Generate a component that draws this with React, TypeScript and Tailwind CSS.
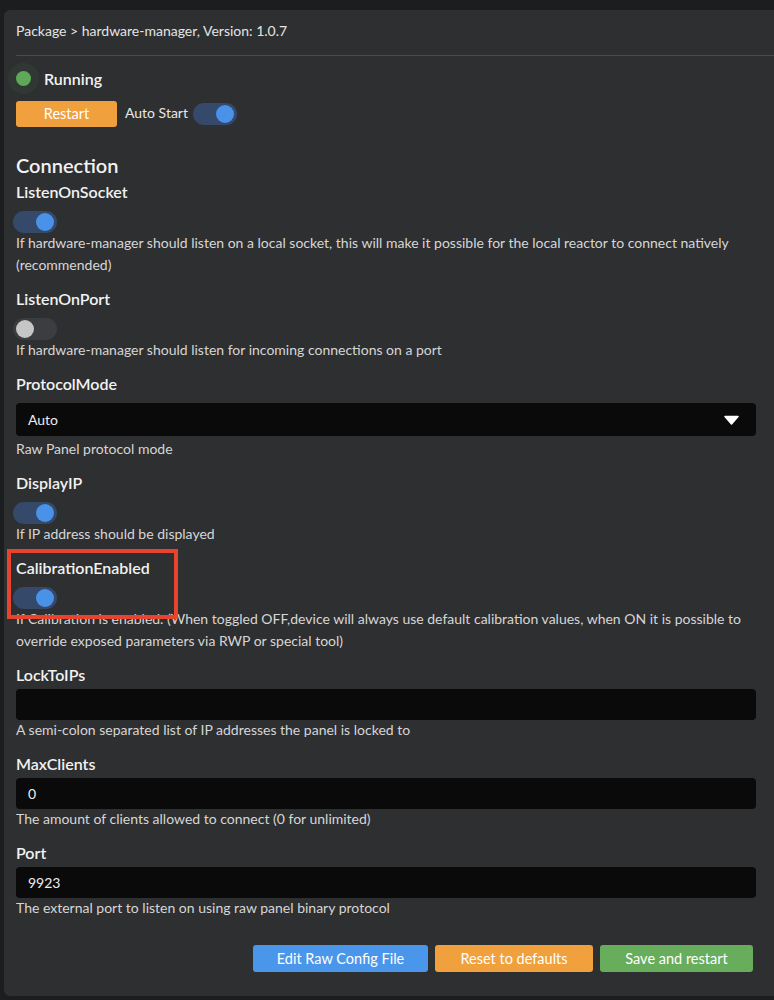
import { ReactNode } from "react"

const font = { fontFamily: "Lato, 'Noto Sans', sans-serif" }

function Toggle({ on }: { on: boolean }) {
  return (
    <div
      className={`relative h-[22px] w-[44px] rounded-full ${on ? "bg-[#35496a]" : "bg-[#3c3d40]"}`}
    >
      <div
        className={`absolute top-[2px] h-[18px] w-[18px] rounded-full ${
          on ? "right-[3px] bg-[#4a92e8]" : "left-[3px] bg-[#c6c6c6]"
        }`}
      />
    </div>
  )
}

function Label({ children }: { children: ReactNode }) {
  return <div className="h-6 text-[16px] font-semibold leading-6 text-[#f2f2f2]">{children}</div>
}

function Desc({ children }: { children: ReactNode }) {
  return <p className="text-[14px] leading-[22px] text-[#d6d6d6]">{children}</p>
}

function SwitchField({ label, on, desc, mark }: { label: string; on: boolean; desc: string; mark?: boolean }) {
  return (
    <div className="relative">
      <Label>{label}</Label>
      <div className="h-[28px] pt-[7px] -ml-[3px]">
        <Toggle on={on} />
      </div>
      <Desc>{desc}</Desc>
      {mark && (
        <div className="pointer-events-none absolute -left-[9px] -top-[7px] h-[70px] w-[171px] border-4 border-[#e8432c]" />
      )}
    </div>
  )
}

function InputField({ label, value, desc }: { label: string; value: string; desc: string }) {
  return (
    <div>
      <Label>{label}</Label>
      <div className="mt-[2px] flex h-[31px] items-center rounded bg-[#0a0a0a] px-3 text-[14px] text-[#ededed]">
        {value}
      </div>
      <div className="-mt-px">
        <Desc>{desc}</Desc>
      </div>
    </div>
  )
}

export default function App() {
  return (
    <div className="min-h-[1000px] overflow-hidden bg-[#1c1d1f] pt-[10px]" style={font}>
      <div className="ml-1 w-[800px] rounded-md bg-[#2e2f31] pb-6 pl-3 pr-[48px] pt-[10px]">
        <div className="w-[740px]">
          {/* Header */}
          <div className="text-[14px] leading-[22px] text-[#e4e4e4]">Package &gt; hardware-manager, Version: 1.0.7</div>
          <div className="mt-[13px] h-px w-[760px] bg-[#4a4b4e]" />

          {/* Status */}
          <div className="mt-[15px] flex h-[15px] items-center gap-[13px]">
            <span className="h-[15px] w-[15px] rounded-full bg-[#5fa85a] shadow-[0_0_0_8px_rgba(95,168,90,0.07)]" />
            <span className="text-[16px] font-semibold text-[#f2f2f2]">Running</span>
          </div>
          <div className="mt-[15px] flex items-center">
            <button className="h-[26px] w-[101px] rounded-[3px] bg-[#f0a03c] text-[14.5px] text-white">Restart</button>
            <span className="mb-[4px] ml-2 mr-[5px] text-[14px] text-[#e8e8e8]">Auto Start</span>
            <Toggle on />
          </div>

          {/* Connection */}
          <h2 className="mt-[24px] text-[20px] font-semibold leading-7 text-[#f2f2f2]">Connection</h2>
          <div className="mt-px flex flex-col gap-[11px]">
            <SwitchField
              label="ListenOnSocket"
              on
              desc="If hardware-manager should listen on a local socket, this will make it possible for the local reactor to connect natively (recommended)"
            />
            <SwitchField
              label="ListenOnPort"
              on={false}
              desc="If hardware-manager should listen for incoming connections on a port"
            />
            <div>
              <Label>ProtocolMode</Label>
              <div className="mt-[7px] flex h-[33px] items-center justify-between rounded bg-[#0a0a0a] pl-3 pr-[17px] text-[14px] text-[#ededed]">
                <span>Auto</span>
                <svg width="15" height="10" viewBox="0 0 15 10">
                  <path d="M1 1.5 H14 L7.5 9 Z" fill="#fff" stroke="#fff" strokeLinejoin="round" strokeWidth="1.5" />
                </svg>
              </div>
              <div className="mt-[2px]">
                <Desc>Raw Panel protocol mode</Desc>
              </div>
            </div>
            <SwitchField label="DisplayIP" on desc="If IP address should be displayed" />
            <SwitchField
              label="CalibrationEnabled"
              on
              mark
              desc="If Calibration is enabled. (When toggled OFF,device will always use default calibration values, when ON it is possible to override exposed parameters via RWP or special tool)"
            />
            <InputField label="LockToIPs" value="" desc="A semi-colon separated list of IP addresses the panel is locked to" />
            <InputField label="MaxClients" value="0" desc="The amount of clients allowed to connect (0 for unlimited)" />
            <InputField label="Port" value="9923" desc="The external port to listen on using raw panel binary protocol" />
          </div>

          {/* Actions */}
          <div className="mt-[26px] flex justify-end gap-[7px] pr-[3px]">
            <button className="h-[27px] w-[175px] rounded-[3px] bg-[#4a96ea] text-[14.5px] text-white">Edit Raw Config File</button>
            <button className="h-[27px] w-[158px] rounded-[3px] bg-[#f0a03c] text-[14.5px] text-white">Reset to defaults</button>
            <button className="h-[27px] w-[153px] rounded-[3px] bg-[#68ad5c] text-[14.5px] text-white">Save and restart</button>
          </div>
        </div>
      </div>
    </div>
  )
}
